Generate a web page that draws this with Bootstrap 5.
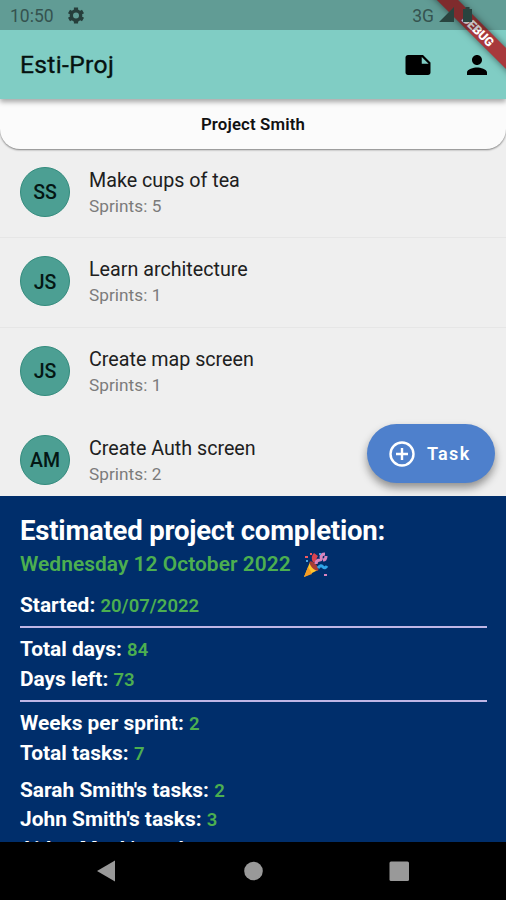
<!DOCTYPE html>
<html lang="en">
<head>
<meta charset="utf-8">
<meta name="viewport" content="width=device-width, initial-scale=1">
<title>Esti-Proj</title>
<link href="https://cdn.jsdelivr.net/npm/bootstrap@5.3.0/dist/css/bootstrap.min.css" rel="stylesheet">
<style>
body{font-family:Roboto,"Liberation Sans",sans-serif;background:#efefef;color:#111;height:900px}
header{background:#80cdc4;box-shadow:0 3px 5px #0005;z-index:3}
.status{height:30px;background:rgba(0,0,0,.24);color:#35534f;font-size:17.5px;line-height:32px;padding:0 32px 0 10px;z-index:6}
.status svg{display:block}
.gear{margin-left:12px;margin-top:5px}
.appbar{height:69px;padding:0 14px 0 20px;color:#061210}
.apptitle{font-size:24.6px;line-height:72px;letter-spacing:.35px;-webkit-text-stroke:.35px #061210}
.person{margin-left:29px}
.proj{height:50px;background:#fbfbfb;border-radius:0 0 20px 20px;box-shadow:0 1px 2px #0007;font-size:16.8px;font-weight:600;letter-spacing:.15px;line-height:50px;z-index:2}
.tasks{height:347px}
.task{height:89.3px;padding:18px 20px 0;border-bottom:1px solid #e6e6e6;gap:19px}
.avatar{width:50px;height:50px;background:#4c9f93;border:1px solid #338b7d;font-size:19.5px;font-weight:500;color:#041714;padding-top:2px}
.tname{font-size:19.7px;line-height:26px;padding-top:1px;color:#202020}
.tsub{font-size:17.2px;line-height:25px;letter-spacing:.05px;color:#7b7b7b}
.fab{right:11px;bottom:13px;width:128px;height:59px;background:#4e80cc;color:#fff;box-shadow:0 5px 8px #0006;font-size:18px;font-weight:600;letter-spacing:1.3px;padding-left:21px;gap:11px}
.summary{height:346px;background:#002e6b;color:#fff;padding:18px 19px 0 20px;font-weight:700;font-size:20.9px;line-height:29.5px}
.summary h1{font-size:27.5px;font-weight:700;line-height:34px;margin:0;letter-spacing:-.2px}
.val{color:#4caf50}
.num{font-size:18.5px;font-weight:600;line-height:1}
.date{font-size:20.9px;line-height:33px;height:32px;font-weight:600;letter-spacing:.05px;padding-top:1px}
.party{margin-left:10px}
.started{margin-top:10.5px}
.rule{height:2px;background:#bfb6e6;margin-top:6px}
.grp{padding-top:7px}
.people{padding-top:7.5px}
.sysnav{height:58px;background:#000}
.corner{width:90px;height:99px;top:0;right:0;z-index:5}
.ribbon{width:160px;height:15px;top:23px;right:-51.5px;transform:rotate(45deg);background:#a8393c;box-shadow:0 0 7px #0008;color:#fff;font-size:12.5px;font-weight:900;line-height:16px;letter-spacing:-.2px}
</style>
</head>
<body class="overflow-hidden position-relative">
<header class="position-relative">
  <div class="status d-flex position-relative">
    <span>10:50</span>
    <svg class="gear" width="20" height="21" viewBox="0 0 24 24" fill="none" stroke="#263e3b"><circle cx="12" cy="12" r="5.6" stroke-width="4"/><path d="M12 2.3v3M12 18.7v3M3.6 7.2l2.7 1.5M17.7 15.3l2.7 1.5M3.6 16.8l2.7-1.5M17.7 8.7l2.7-1.500" stroke-width="5"/></svg>
    <span class="ms-auto">3G</span>
    <svg width="40" height="30" viewBox="0 0 40 30" fill="#29443f"><path d="M5 22 20 7v15zM29 9h2.500V7h4v2H38v13h-9z"/></svg>
  </div>
  <div class="appbar d-flex align-items-center">
    <span class="apptitle">Esti-Proj</span>
    <svg class="ms-auto" width="30" height="30" viewBox="0 0 24 24"><path d="M22 10l-6-6H4c-1.100 0-2 .9-2 2v12.010c0 1.100.9 1.990 2 1.990h16c1.100 0 2-.9 2-2v-8zm-7-4.500l5.500 5.500H15V5.500z"/></svg>
    <svg class="person" width="30" height="30" viewBox="0 0 24 24"><path d="M12 12c2.210 0 4-1.790 4-4s-1.790-4-4-4-4 1.790-4 4 1.790 4 4 4zm0 2c-2.670 0-8 1.340-8 4v2h16v-2c0-2.660-5.330-4-8-4z"/></svg>
  </div>
  <div class="corner position-absolute overflow-hidden"><div class="ribbon position-absolute text-center">DEBUG</div></div>
</header>
<div class="proj text-center position-relative">Project Smith</div>
<main class="tasks overflow-hidden position-relative">
  <div class="task d-flex"><div class="avatar rounded-circle d-flex align-items-center justify-content-center">SS</div><div><div class="tname">Make cups of tea</div><div class="tsub">Sprints: 5</div></div></div>
  <div class="task d-flex"><div class="avatar rounded-circle d-flex align-items-center justify-content-center">JS</div><div><div class="tname">Learn architecture</div><div class="tsub">Sprints: 1</div></div></div>
  <div class="task d-flex border-0"><div class="avatar rounded-circle d-flex align-items-center justify-content-center">JS</div><div><div class="tname">Create map screen</div><div class="tsub">Sprints: 1</div></div></div>
  <div class="task d-flex border-0"><div class="avatar rounded-circle d-flex align-items-center justify-content-center">AM</div><div><div class="tname">Create Auth screen</div><div class="tsub">Sprints: 2</div></div></div>
  <button class="fab position-absolute border-0 rounded-pill d-flex align-items-center"><svg width="28" height="28" viewBox="0 0 28 28" fill="none" stroke="#fff" stroke-width="2.400"><circle cx="14" cy="14" r="11.500"/><path d="M14 8v12M8 14h12"/></svg>Task</button>
</main>
<section class="summary overflow-hidden">
  <h1>Estimated project completion:</h1>
  <div class="date val d-flex align-items-center">Wednesday 12 October 2022
    <svg class="party" width="28" height="28" viewBox="0 0 28 28"><path d="M3 26 9 11q5 3 8 8z" fill="#ffc62e"/><path d="m3 26 4-10q3 4 4 7z" fill="#f79c22"/><ellipse cx="13" cy="15" rx="2.500" ry="6" transform="rotate(-43 13 15)" fill="#a63c35"/><path d="M12 11q-3-5 1-9l4 3q-3 3 0 8z" fill="#d9434f"/><path d="M15 13q0-4 4-4 2 0 1-3 0-3 4-3M22 9q3 0 3-4" fill="none" stroke="#d884bd" stroke-width="3"/><path d="M17 17q3-4 5-1 2 2 4-1" fill="none" stroke="#30a5e8" stroke-width="3"/><path d="M4 5h3v2H4zM9 2h2v2H9z" fill="#ef5a60"/><path d="M5 9h2v2H5zM18 2h2v2h-2z" fill="#45a5e2"/><path d="M23 23h3v2h-3z" fill="#d884bd"/></svg>
  </div>
  <div class="started">Started: <span class="val num">20/07/2022</span></div>
  <div class="rule"></div>
  <div class="grp">Total days: <span class="val num">84</span><br>Days left: <span class="val num">73</span></div>
  <div class="rule"></div>
  <div class="grp">Weeks per sprint: <span class="val num">2</span><br>Total tasks: <span class="val num">7</span></div>
  <div class="people">Sarah Smith's tasks: <span class="val num">2</span><br>John Smith's tasks: <span class="val num">3</span><br>Aiden Mack's tasks: <span class="val num">2</span></div>
</section>
<footer class="sysnav">
  <svg class="d-block" width="506" height="58" viewBox="0 0 506 58" fill="#999"><path d="M97 29 115 18.500v21z"/><circle cx="253.500" cy="29" r="9.300"/><rect x="389.500" y="19.500" width="19.500" height="19.500" rx="1.500"/></svg>
</footer>
<script src="https://cdn.jsdelivr.net/npm/bootstrap@5.3.0/dist/js/bootstrap.bundle.min.js"></script>
</body>
</html>
